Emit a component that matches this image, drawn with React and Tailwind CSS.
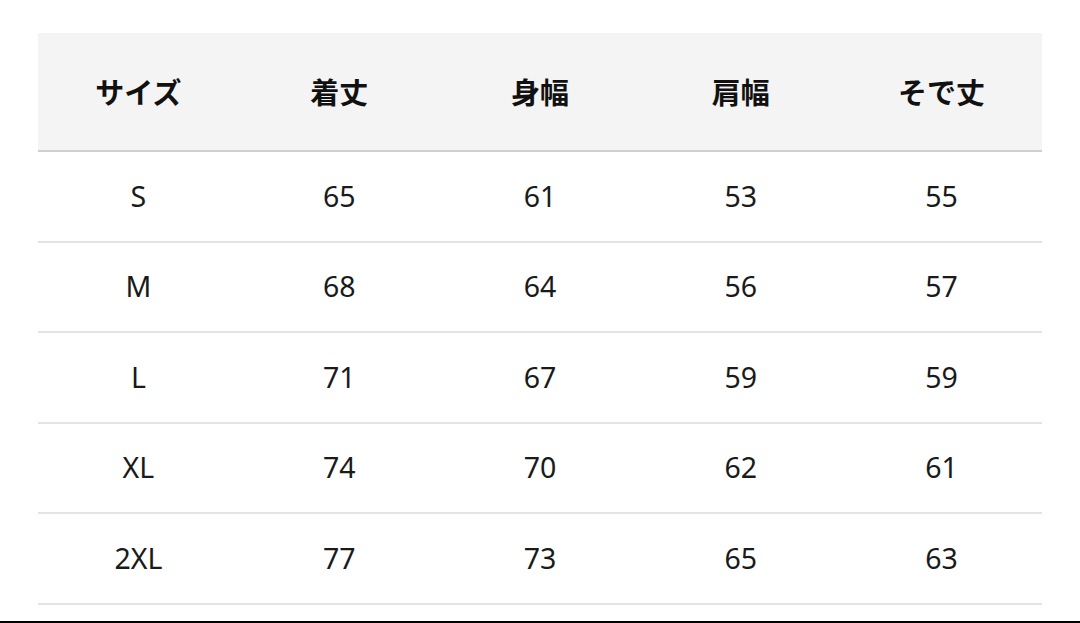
import React from "react";

const headers = ["サイズ", "着丈", "身幅", "肩幅", "そで丈"];
const rows = [
  ["S", "65", "61", "53", "55"],
  ["M", "68", "64", "56", "57"],
  ["L", "71", "67", "59", "59"],
  ["XL", "74", "70", "62", "61"],
  ["2XL", "77", "73", "65", "63"],
];

export default function App() {
  return (
    <div
      className="w-[1080px] h-[623px] bg-white flex flex-col overflow-hidden"
      style={{ fontFamily: '"Noto Sans", "Noto Sans CJK JP", sans-serif' }}
    >
      <div className="pt-[33px] px-[38px]">
        <div className="grid grid-cols-5 h-[117px] bg-[#f4f4f4] border-b-2 border-[#cfcfcf] box-content">
          {headers.map((h) => (
            <div
              key={h}
              className="flex items-center justify-center text-[29px] font-bold text-[#111]"
              style={{ fontFamily: '"Noto Sans CJK JP", sans-serif' }}
            >
              {h}
            </div>
          ))}
        </div>
        {rows.map((r, i) => (
          <div
            key={i}
            className="grid grid-cols-5 h-[88.5px] border-b-2 border-[#e4e4e4] box-content"
          >
            {r.map((c, j) => (
              <div
                key={j}
                className="flex items-center justify-center text-[28.5px] text-[#1a1a1a]"
              >
                {c}
              </div>
            ))}
          </div>
        ))}
      </div>
      <div className="flex-1" />
      <div className="h-[2px] bg-black" />
    </div>
  );
}
